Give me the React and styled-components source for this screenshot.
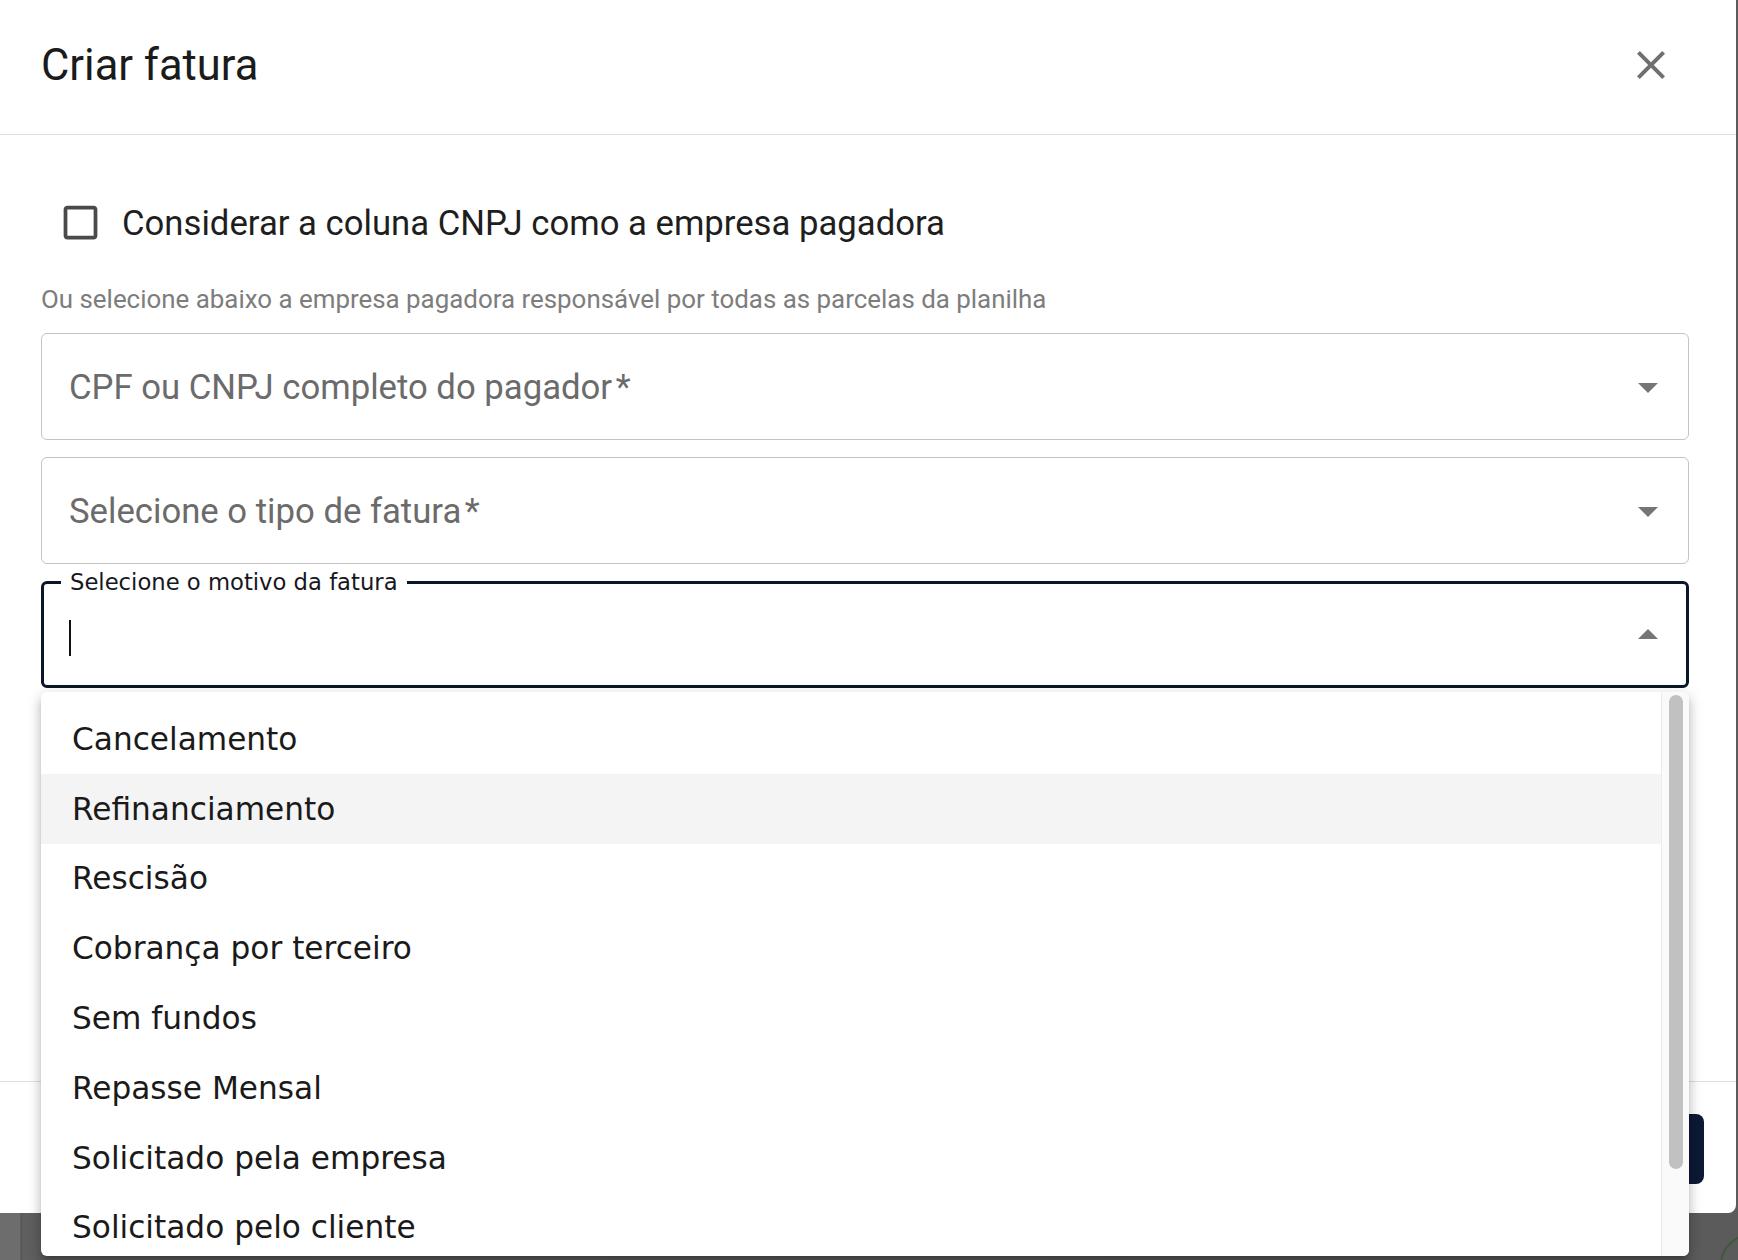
import React from 'react'
import styled, { createGlobalStyle } from 'styled-components'

const GlobalStyle = createGlobalStyle`
  html, body {
    margin: 0;
    padding: 0;
    overflow: hidden;
  }
  * {
    box-sizing: border-box;
  }
`

const Page = styled.div`
  position: relative;
  width: 1738px;
  height: 1260px;
  background: linear-gradient(90deg, #6d6d6d 0px, #6d6d6d 20px, #4f4f4f 21px, #5f5f5f 22px, #5b5b5b 100%);
  overflow: hidden;
`

const Modal = styled.div`
  position: relative;
  width: 1736px;
  height: 1213px;
  background: #fff;
  border-bottom-right-radius: 8px;
  display: flex;
  flex-direction: column;
`

const Header = styled.div`
  height: 135px;
  flex-shrink: 0;
  display: flex;
  align-items: center;
  justify-content: space-between;
  padding: 0 61px 4px 41px;
  border-bottom: 1px solid #e0e0e0;
`

const Title = styled.h1`
  margin: 0;
  font-family: Roboto, "Liberation Sans", sans-serif;
  font-weight: 400;
  font-size: 43.5px;
  color: #1b1b1b;
`

const CloseButton = styled.button`
  border: none;
  background: none;
  padding: 0;
  width: 48px;
  height: 48px;
  display: flex;
  color: #707070;
  cursor: pointer;
`

const Body = styled.div`
  flex: 1;
  display: flex;
  flex-direction: column;
  padding: 65px 47px 0 41px;
`

const CheckRow = styled.label`
  display: flex;
  align-items: center;
  gap: 19px;
  margin-left: 17px;
  height: 45px;
  font-family: Roboto, "Liberation Sans", sans-serif;
  font-size: 34.7px;
  color: #1e1e1e;
`

const CheckIcon = styled.span`
  width: 45px;
  height: 45px;
  display: flex;
  color: #4a4a4a;
`

const Helper = styled.p`
  margin: 39px 0 19px;
  line-height: 30px;
  font-family: Roboto, "Liberation Sans", sans-serif;
  font-size: 25.9px;
  color: #7d7d7d;
`

const Fields = styled.div`
  display: flex;
  flex-direction: column;
  gap: 17px;
`

const Field = styled.div`
  position: relative;
  height: 107px;
  display: flex;
  align-items: center;
  border: ${(p) => (p.$focused ? '3px solid #0b1629' : '1px solid #c4c4c4')};
  border-radius: 6px;
  padding-left: ${(p) => (p.$focused ? '25px' : '27px')};
  padding-right: ${(p) => (p.$focused ? '14px' : '16px')};
`

const Placeholder = styled.span`
  flex: 1;
  font-family: Roboto, "Liberation Sans", sans-serif;
  font-size: 34.7px;
  color: #6b6b6b;
`

const FloatLabel = styled.span`
  position: absolute;
  top: -15px;
  left: 17px;
  padding: 0 9px;
  background: #fff;
  line-height: 26px;
  font-family: "DejaVu Sans", Verdana, sans-serif;
  font-size: 22.7px;
  color: #16181d;
`

const Caret = styled.span`
  flex: 1;
  height: 36px;
  display: flex;
  margin-top: 6px;
  &::before {
    content: '';
    width: 2px;
    height: 36px;
    background: #111;
  }
`

const Arrow = styled.span`
  width: 48px;
  height: 48px;
  display: flex;
  color: #757575;
`

const Footer = styled.div`
  height: 132px;
  flex-shrink: 0;
  display: flex;
  align-items: center;
  justify-content: flex-end;
  padding: 0 32px 0 41px;
  border-top: 1px solid #e0e0e0;
`

const PrimaryButton = styled.button`
  height: 70px;
  padding: 0 48px;
  border: none;
  border-radius: 8px;
  background: #0c1a35;
  color: #fff;
  font-family: "DejaVu Sans", sans-serif;
  font-size: 26px;
  margin-top: 2px;
`

const Popup = styled.div`
  position: absolute;
  top: 692px;
  left: 41px;
  width: 1648px;
  height: 564px;
  background: #fff;
  border-radius: 6px;
  overflow: hidden;
  display: flex;
  box-shadow: 0 5px 5px -3px rgba(0, 0, 0, 0.2), 0 8px 10px 1px rgba(0, 0, 0, 0.14),
    0 3px 14px 2px rgba(0, 0, 0, 0.12);
`

const OptionList = styled.ul`
  flex: 1;
  margin: 0;
  padding: 12px 0 0;
  list-style: none;
`

const Option = styled.li`
  height: 69.8px;
  display: flex;
  align-items: center;
  padding-left: 31px;
  font-family: "DejaVu Sans", Verdana, sans-serif;
  font-size: 31.2px;
  color: #1a1a1a;
  background: ${(p) => (p.$active ? '#f4f4f4' : 'transparent')};
`

const ScrollTrack = styled.div`
  width: 28px;
  flex-shrink: 0;
  padding: 3px 6px 0 7px;
  background: #fafafa;
  border-left: 1px solid #ececec;
`

const ScrollThumb = styled.div`
  height: 474px;
  border-radius: 7px;
  background: #c1c1c1;
`

const Widget = styled.div`
  position: absolute;
  right: -44px;
  bottom: -36px;
  width: 62px;
  height: 62px;
  border-radius: 50%;
  border: 2px solid #3f5a3a;
`

const options = [
  'Cancelamento',
  'Refinanciamento',
  'Rescisão',
  'Cobrança por terceiro',
  'Sem fundos',
  'Repasse Mensal',
  'Solicitado pela empresa',
  'Solicitado pelo cliente',
]

const DropIcon = ({ up }) => (
  <svg width="48" height="48" viewBox="0 0 24 24" fill="currentColor">
    <path d={up ? 'M7 14l5-5 5 5z' : 'M7 10l5 5 5-5z'} />
  </svg>
)

const App = () => {
  return (
    <Page>
      <GlobalStyle />
      <Modal>
        <Header>
          <Title>Criar fatura</Title>
          <CloseButton aria-label="Fechar">
            <svg width="48" height="48" viewBox="0 0 24 24" fill="currentColor">
              <path d="M19 6.41 17.59 5 12 10.59 6.41 5 5 6.41 10.59 12 5 17.59 6.41 19 12 13.41 17.59 19 19 17.59 13.41 12z" />
            </svg>
          </CloseButton>
        </Header>
        <Body>
          <CheckRow>
            <CheckIcon>
              <svg width="45" height="45" viewBox="0 0 24 24" fill="currentColor">
                <path d="M19 5v14H5V5h14m0-2H5c-1.11 0-2 .9-2 2v14c0 1.1.89 2 2 2h14c1.1 0 2-.9 2-2V5c0-1.1-.9-2-2-2z" />
              </svg>
            </CheckIcon>
            Considerar a coluna CNPJ como a empresa pagadora
          </CheckRow>
          <Helper>Ou selecione abaixo a empresa pagadora responsável por todas as parcelas da planilha</Helper>
          <Fields>
            <Field>
              <Placeholder>CPF ou CNPJ completo do pagador{'\u200A'}*</Placeholder>
              <Arrow><DropIcon /></Arrow>
            </Field>
            <Field>
              <Placeholder>Selecione o tipo de fatura{'\u200A'}*</Placeholder>
              <Arrow><DropIcon /></Arrow>
            </Field>
            <Field $focused>
              <FloatLabel>Selecione o motivo da fatura</FloatLabel>
              <Caret />
              <Arrow><DropIcon up /></Arrow>
            </Field>
          </Fields>
        </Body>
        <Footer>
          <PrimaryButton>Criar fatura</PrimaryButton>
        </Footer>
        <Popup>
          <OptionList>
            {options.map((o, i) => (
              <Option key={o} $active={i === 1}>{o}</Option>
            ))}
          </OptionList>
          <ScrollTrack>
            <ScrollThumb />
          </ScrollTrack>
        </Popup>
      </Modal>
      <Widget />
    </Page>
  )
}

export default App
